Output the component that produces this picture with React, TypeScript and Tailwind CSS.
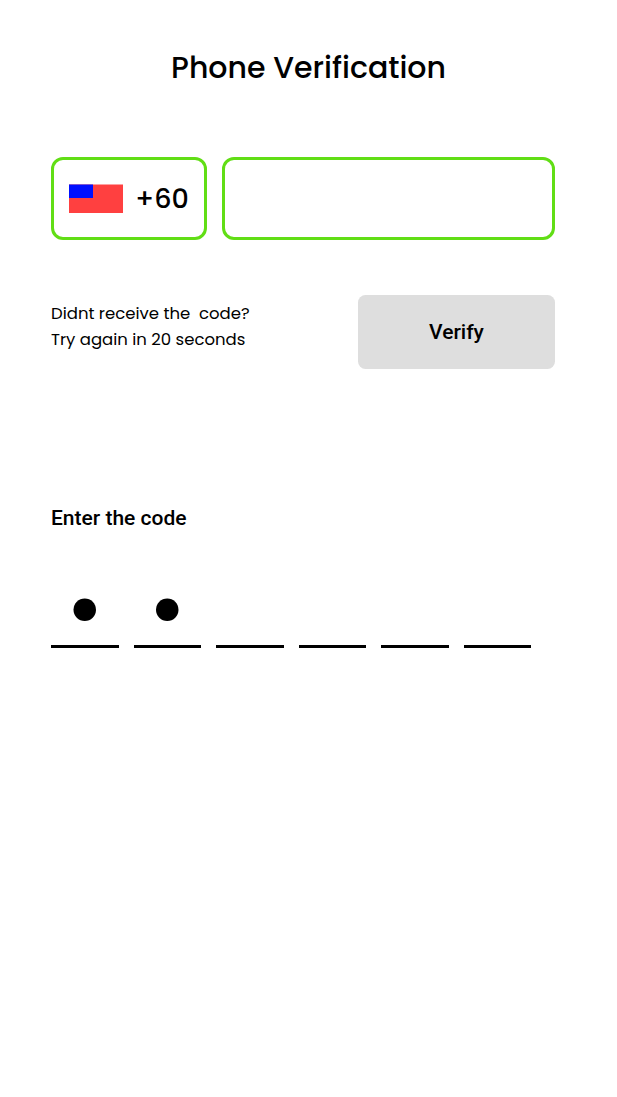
export default function App() {
  const slots = [true, true, false, false, false, false];
  return (
    <main className="flex h-[1097px] w-[617px] flex-col overflow-hidden bg-white font-['Poppins','Open_Sans',sans-serif] text-black">
      <h1 className="mt-[45px] text-center text-[30px] leading-[45px] font-medium whitespace-nowrap">Phone Verification</h1>
      <div className="mt-[67px] ml-[51px] flex h-[83px] gap-[15px]">
        <div className="flex w-[156px] items-center rounded-[12px] border-3 border-[#61de15] pl-[15px]">
          <svg className="h-[29px] w-[54px] shrink-0" viewBox="0 0 54 29" aria-hidden="true">
            <path d="M0 .5h54V29H0z" fill="#ff4040" />
            <path d="M0 .5h24V14H0z" fill="#0010ff" />
          </svg>
          <span className="ml-[12px] text-[27px] leading-none font-medium">+60</span>
        </div>
        <div className="w-[333px] rounded-[12px] border-3 border-[#61de15]" />
      </div>
      <div className="mt-[55px] ml-[51px] flex h-[74px] w-[504px] justify-between">
        <p className="pt-[6px] text-[16.5px] leading-[25.5px] whitespace-pre">{"Didnt receive the  code?\nTry again in 20 seconds"}</p>
        <button className="w-[197px] rounded-[7.5px] bg-[#dedede] pt-[2px] font-['Roboto',sans-serif] text-[21px] font-medium">Verify</button>
      </div>
      <h2 className="mt-[136px] ml-[51px] font-['Roboto',sans-serif] text-[21px] leading-[26px] font-medium">Enter the code</h2>
      <div className="mt-[67px] ml-[51px] flex gap-[15px]">
        {slots.map((filled, i) => (
          <div key={i} className="flex h-[50px] w-[67.5px] flex-col items-center justify-between">
            <svg className="h-[24px] w-[67.5px]" viewBox="0 0 67.5 24" aria-hidden="true">
              {filled && <circle cx={i % 2 ? 33.25 : 33.75} cy="11.75" r="11.25" />}
            </svg>
            <div className="h-[3px] w-full bg-black" />
          </div>
        ))}
      </div>
    </main>
  );
}
